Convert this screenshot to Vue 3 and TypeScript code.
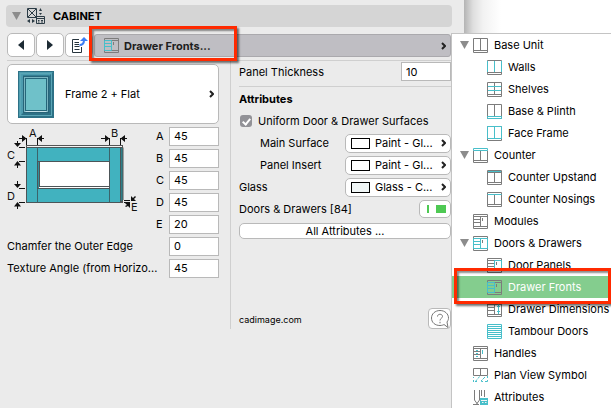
<script setup lang="ts">
import { ref } from 'vue'

type Tone = 'grey' | 'cyan' | 'fill' | 'pale'
interface Stroke { d: string; tone: Tone }
interface MenuItem { label: string; icon: string; level: number; open?: boolean }

const s = (tone: Tone, d: string): Stroke => ({ tone, d })

const cabinet = 'M.5 .5H14.5V14.5H.5ZM.5 12.5H14.5'
const split = 'M7.5 .5V12'
const topRail = 'M.5 2.5H14.5'
const drawers = 'M1 5.5H7.5M1 8.5H7.5'
const handle = 'M9.5 4V7'

const icons: Record<string, Stroke[]> = {
  base: [s('grey', cabinet + split)],
  walls: [s('grey', cabinet), s('cyan', 'M.5 1V12M7.5 1V12M14.5 1V12')],
  shelves: [s('grey', cabinet + split), s('cyan', 'M1 4.5H14M1 8.5H14')],
  plinth: [s('grey', cabinet + split), s('cyan', 'M.5 12.5H14.5V14.5H.5Z')],
  face: [s('grey', cabinet), s('cyan', 'M.5 .5H14.5V12.5H.5ZM7.5 .5V12')],
  counter: [s('grey', 'M.5 2.5V14.5H14.5V2.5M.5 12.5H14.5M7.5 3V12'), s('cyan', 'M.5 .5H14.5V2.5H.5Z')],
  upstand: [s('grey', cabinet + topRail + 'M7.5 3V12'), s('cyan', 'M1 1.5H14')],
  nosings: [s('grey', cabinet + 'M7.5 3V12'), s('cyan', 'M.5 2.5H14.5')],
  modules: [s('grey', cabinet + topRail + drawers + handle + 'M7.5 3V12')],
  doors: [s('grey', cabinet), s('cyan', 'M.5 2.5H14.5V12.5H.5ZM7.5 3V12' + drawers), s('grey', handle)],
  panels: [s('grey', cabinet + topRail + drawers), s('cyan', 'M7.5 2.5H14.5V12.5H7.5Z'), s('grey', handle)],
  fronts: [s('grey', cabinet + topRail + handle), s('cyan', 'M.5 2.5H7.5V12.5H.5Z' + drawers)],
  dimensions: [s('grey', cabinet + topRail + drawers + 'M7.5 3V12'), s('cyan', 'M11.5 1V12M10 4.5H13M10 9.5H13')],
  tambour: [s('cyan', 'M.5 .5H14.5V14.5H.5ZM1 2.5H14M1 4.5H14M1 6.5H14M1 8.5H14M1 10.5H14M1 12.5H14')],
  handles: [s('grey', cabinet + topRail + drawers + 'M7.5 3V12'), s('cyan', 'M9.5 4V8M3 4.5H5M3 7.5H5M3 10.5H5')],
  plan: [s('grey', 'M.5 .5H14.5V7.5H.5ZM7.5 .5V7.5'), s('cyan', 'M.5 9V10M.5 12V14M2 13.5H4M6.5 8.5L5 10.5M4 11.5L2.5 13.5M8.5 12V13.500H10M9.500 11.500L12 9M12 13.5H14.500V12M14.500 8V10')],
  attributes: [s('grey', 'M1.5 0V10L4 13.500L6.500 10V0M4 13V15M8.500 0V6M11.500 0V7M0 14.500H6'), s('fill', 'M7 8H15V15H7Z'), s('pale', 'M8 10.500H14M9 12.500H10.500M12 12.500H13.500')],
}

const menu: MenuItem[] = [
  { label: 'Base Unit', icon: 'base', level: 0, open: true },
  { label: 'Walls', icon: 'walls', level: 1 },
  { label: 'Shelves', icon: 'shelves', level: 1 },
  { label: 'Base & Plinth', icon: 'plinth', level: 1 },
  { label: 'Face Frame', icon: 'face', level: 1 },
  { label: 'Counter', icon: 'counter', level: 0, open: true },
  { label: 'Counter Upstand', icon: 'upstand', level: 1 },
  { label: 'Counter Nosings', icon: 'nosings', level: 1 },
  { label: 'Modules', icon: 'modules', level: 0 },
  { label: 'Doors & Drawers', icon: 'doors', level: 0, open: true },
  { label: 'Door Panels', icon: 'panels', level: 1 },
  { label: 'Drawer Fronts', icon: 'fronts', level: 1 },
  { label: 'Drawer Dimensions', icon: 'dimensions', level: 1 },
  { label: 'Tambour Doors', icon: 'tambour', level: 1 },
  { label: 'Handles', icon: 'handles', level: 0 },
  { label: 'Plan View Symbol', icon: 'plan', level: 0 },
  { label: 'Attributes', icon: 'attributes', level: 0 },
]

const selected = ref('Drawer Fronts')
const uniform = ref(true)
const thickness = ref('10')
const sizes = ref([
  { id: 'A', value: '45' },
  { id: 'B', value: '45' },
  { id: 'C', value: '45' },
  { id: 'D', value: '45' },
  { id: 'E', value: '20' },
])
const chamfer = ref('0')
const angle = ref('45')
const surfaces = [
  { label: 'Main Surface', value: 'Paint - Gl...', nested: true, tint: 'white' },
  { label: 'Panel Insert', value: 'Paint - Gl...', nested: true, tint: 'white' },
  { label: 'Glass', value: 'Glass - C...', nested: false, tint: 'glass' },
]
</script>

<template>
  <div class="window">
    <main class="panel">
      <header class="title">
        <svg class="twisty" viewBox="0 0 9 8"><path d="M0 0H9L4.500 8Z" /></svg>
        <svg class="logo" viewBox="0 0 18 16">
          <path d="M.5 .5H9.500V9.500H.5ZM1 1L9 9M9 1L1 9" />
          <path d="M9.500 8.500H17.500V15.500H9.500ZM9.500 10.500H17.500M11 12.500H12.500M14 12.500H16M11 14H12.500M14 14H16" />
          <path class="solid" d="M12 3L13.500 0L15 3ZM12 5H15L13.500 7ZM3 11V15L0 13ZM5 11V15L8 13Z" />
        </svg>
        <h1>CABINET</h1>
      </header>

      <nav class="toolbar">
        <button class="tool" type="button" aria-label="Previous"><svg viewBox="0 0 8 12"><path d="M7 1V11L1 6Z" /></svg></button>
        <button class="tool" type="button" aria-label="Next"><svg viewBox="0 0 8 12"><path d="M1 1V11L7 6Z" /></svg></button>
        <button class="tool" type="button" aria-label="Go to page">
          <svg class="page" viewBox="0 0 17 16">
            <path class="sheet" d="M8 2.500H1.500V15.500H10.500V10M3.500 5.500H8M3.500 7.500H8M3.500 9.500H8.500M3.500 12.500H8.500" />
            <path class="arrow" d="M8.500 8C12 8 13 6 13 3" />
            <path class="head" d="M9 4L13 0L17 4Z" />
          </svg>
        </button>
        <div class="picker-wrap">
          <button class="picker" type="button">
            <svg class="icon" viewBox="0 0 15 15"><path v-for="(p, i) in icons.fronts" :key="i" :class="p.tone" :d="p.d" /></svg>
            <span>{{ selected }}...</span>
            <svg class="chevron" viewBox="0 0 5 8"><path d="M1 1L4 4L1 7" /></svg>
          </button>
          <span class="callout callout-picker" />
        </div>
      </nav>

      <div class="columns">
        <section class="left">
          <button class="style-card" type="button">
            <svg class="door" viewBox="0 0 36 47">
              <rect width="36" height="47" fill="#2d7186" />
              <path d="M1 1H35L31 5H5V42L1 46Z" fill="#4d9caf" />
              <path d="M5 4H31V42H5Z" fill="#347f93" />
              <rect x="2.500" y="2.500" width="31" height="42" fill="none" stroke="#5aa6b6" />
              <rect x="5.500" y="5.500" width="25" height="36" fill="#79b5c0" stroke="#276479" />
              <rect x="7.500" y="7.500" width="21" height="32" fill="#6fc1c9" stroke="#25667a" />
              <path d="M7 41L8 40H28L29 41Z" fill="#c4e2e8" />
            </svg>
            <span>Frame 2 + Flat</span>
            <svg class="chevron" viewBox="0 0 5 8"><path d="M1 1L4 4L1 7" /></svg>
          </button>

          <div class="dims">
            <svg class="diagram" viewBox="7 126 136 86">
              <rect x="26.500" y="145.500" width="96" height="57" fill="#f4f4f4" stroke="#555" />
              <path d="M120.500 147.500H123V200L120.500 202.500Z" fill="#2c7f88" stroke="#555" />
              <rect x="26.500" y="147.500" width="94" height="55" fill="#41b2bf" stroke="#4c5558" />
              <path d="M37.500 147.500V202.500M109.500 147.500V202.500" stroke="#3b646b" />
              <rect x="37.500" y="161.500" width="72" height="27" fill="#338f9a" stroke="#4c5558" />
              <rect x="39.500" y="161.500" width="70" height="25" fill="#fff" stroke="#4c5558" />
              <path d="M39 187.500H109" stroke="#fff" />
              <path d="M26.500 138V145M37.500 138V145M109.500 138V145M120.500 138V145M19 147.500H25M19 161.500H25M19 188.500H25M19 202.500H25M124 200.500H130M124 202.500H130" stroke="#111" />
              <path d="M19 138.500H23M41 138.500H44M101 138.500H105M124 138.500H127M17.500 141V144M17.500 165V168M17.500 181V184M17.500 206V209" stroke="#111" />
              <path d="M22 135L26.500 138.500L22 142ZM42 135L37.500 138.500L42 142ZM105 135L109.500 138.500L105 142ZM125 135L120.500 138.500L125 142ZM14 143L17.500 147L21 143ZM14 165.500L17.500 161L21 165.500ZM14 184L17.500 188L21 184ZM14 206.500L17.500 202L21 206.500ZM131 196L131 201L136 201L134 199L136 197L135 196L133 198ZM125 203H130V208L128 206L126 207L125 206L127 205Z" fill="#111" />
              <text x="29" y="137">A</text>
              <text x="111" y="137">B</text>
              <text x="7" y="159">C</text>
              <text x="7" y="200">D</text>
              <text x="131" y="211">E</text>
            </svg>
            <div class="sizes">
              <label v-for="row in sizes" :key="row.id" class="row">
                <span>{{ row.id }}</span>
                <input v-model="row.value" class="field" type="text">
              </label>
            </div>
          </div>

          <label class="row"><span>Chamfer the Outer Edge</span><input v-model="chamfer" class="field" type="text"></label>
          <label class="row"><span>Texture Angle (from Horizo...</span><input v-model="angle" class="field" type="text"></label>
        </section>

        <section class="right">
          <label class="row thickness"><span>Panel Thickness</span><input v-model="thickness" class="field" type="text"></label>
          <h2>Attributes</h2>
          <label class="row check">
            <input v-model="uniform" type="checkbox">
            <span>Uniform Door &amp; Drawer Surfaces</span>
          </label>
          <div v-for="(item, i) in surfaces" :key="i" class="row" :class="{ nested: item.nested }">
            <span :id="`surface-${i}`">{{ item.label }}</span>
            <button class="surface" type="button" :aria-describedby="`surface-${i}`">
              <i class="swatch" :class="item.tint" />
              <span>{{ item.value }}</span>
              <svg class="chevron" viewBox="0 0 5 8"><path d="M1 1L4 4L1 7" /></svg>
            </button>
          </div>
          <div class="row">
            <span id="pen">Doors &amp; Drawers [84]</span>
            <button class="pen" type="button" aria-labelledby="pen"><i class="thin" /><i class="thick" /></button>
          </div>
          <button class="all" type="button">All Attributes ...</button>
          <footer>
            <a href="#">cadimage.com</a>
            <button class="help" type="button" aria-label="Help">
              <svg viewBox="0 0 20 20">
                <path d="M10 1.500C5 1.500 1.500 5 1.500 9C1.500 13.500 5 16.500 10 16.500C12 16.500 13 16 14 15.500L18 18.500L17 13C18.500 11 18.500 9.500 18.500 9C18.500 5 15 1.500 10 1.500Z" />
                <path class="mark" d="M7.500 7.500C7.500 4.500 12.500 4.500 12.500 7.500C12.500 9.300 10 9.300 10 11.500M10 12.800V14.300" />
              </svg>
            </button>
          </footer>
        </section>
      </div>
    </main>

    <aside class="menu">
      <ul>
        <li v-for="item in menu" :key="item.label">
          <button
            type="button"
            class="entry"
            :class="{ child: item.level === 1, active: item.label === selected }"
            @click="selected = item.label"
          >
            <svg v-if="item.level === 0" class="twisty" viewBox="0 0 9 8"><path v-if="item.open" d="M0 0H9L4.500 8Z" /></svg>
            <svg class="icon" viewBox="0 0 15 15"><path v-for="(p, i) in icons[item.icon]" :key="i" :class="p.tone" :d="p.d" /></svg>
            <span>{{ item.label }}</span>
          </button>
          <span v-if="item.label === 'Drawer Fronts'" class="callout callout-entry" />
        </li>
      </ul>
    </aside>
  </div>
</template>

<style>
body {
  background: #fff;
}
</style>

<style scoped>
* {
  box-sizing: border-box;
}
.window {
  position: relative;
  min-height: 100vh;
  padding-right: 147px;
  background: linear-gradient(to left, #fff 110px, #f2f2f2 128px, #dedede 138px, #b4b4b4 147px);
  color: #000;
  font: 11px/16px Inter, "Liberation Sans", sans-serif;
  overflow: hidden;
}
button,
input {
  margin: 0;
  font: inherit;
  color: inherit;
}
button {
  padding: 0;
  border: 1px solid #b9b9b9;
  border-radius: 5px;
  background: #fff;
  text-align: left;
}
svg {
  display: block;
  flex: none;
}
.panel {
  min-height: 100vh;
  padding: 5px 13px 0 6px;
  background: #ebebeb;
}
.title {
  display: flex;
  align-items: center;
  height: 22px;
  margin-right: -1px;
  padding-left: 6px;
  border-radius: 4px;
  background: #d5d5d5;
}
h1,
h2 {
  margin: 0;
  font-size: 11px;
  line-height: 24px;
  font-weight: 700;
}
.twisty {
  width: 9px;
  height: 8px;
  fill: #8c8c8c;
}
.logo {
  width: 18px;
  height: 16px;
  margin: 0 8px 0 6px;
  fill: none;
  stroke: #2b3b45;
}
.logo .solid {
  fill: #2b3b45;
  stroke: none;
}
.toolbar {
  display: flex;
  gap: 1px;
  margin-left: 1px;
  padding: 6px 0 3px;
  border-bottom: 1px solid #cfcfcf;
}
.tool {
  display: flex;
  align-items: center;
  justify-content: center;
  width: 28px;
  height: 24px;
}
.tool svg {
  width: 8px;
  height: 12px;
  fill: #1d2b34;
}
.tool .page {
  width: 17px;
  height: 16px;
}
.page .sheet {
  fill: none;
  stroke: #26343d;
}
.page .arrow {
  fill: none;
  stroke: #3b7df5;
  stroke-width: 2;
}
.page .head {
  fill: #3b7df5;
}
.picker-wrap {
  position: relative;
  flex: 1;
}
.picker {
  display: flex;
  align-items: center;
  gap: 5px;
  width: 100%;
  height: 23px;
  margin-top: 1px;
  padding: 0 4px 0 9px;
  border-color: #aaa9ad;
  border-radius: 3px;
  background: #bfbec3;
  font-weight: 700;
  color: #1d1d20;
}
.chevron {
  width: 5px;
  height: 8px;
  margin-left: auto;
  fill: none;
  stroke: #222;
  stroke-width: 2;
}
.callout {
  position: absolute;
  z-index: 2;
  border: 3px solid #ff2a00;
  box-shadow: 2px 2px 2px rgba(0, 0, 0, 0.55), inset 2px 2px 2px rgba(0, 0, 0, 0.45);
  pointer-events: none;
}
.callout-picker {
  top: -7px;
  left: -5px;
  width: 148px;
  height: 35px;
}
.columns {
  display: grid;
  grid-template-columns: 223px minmax(0, 1fr);
  margin-left: 1px;
}
.left {
  padding: 3px 11px 0 0;
}
.style-card {
  display: flex;
  align-items: center;
  gap: 11px;
  width: 100%;
  height: 60px;
  padding: 0 4px 0 10px;
}
.door {
  width: 36px;
  height: 47px;
}
.dims {
  display: flex;
  justify-content: space-between;
  margin-top: 1px;
}
.diagram {
  width: 136px;
  height: 86px;
  margin-top: 1px;
  fill: none;
}
.diagram text {
  fill: #111;
  font-size: 11px;
}
.sizes {
  width: 63px;
}
.row {
  display: flex;
  align-items: center;
  justify-content: space-between;
  height: 22px;
  white-space: nowrap;
}
.field {
  flex: none;
  width: 50px;
  height: 19px;
  padding: 0 4px;
  border: 1px solid #b9b9b9;
  border-radius: 0;
  background: #fff;
  outline: none;
}
.right {
  display: flex;
  flex-direction: column;
  min-height: 268px;
  padding-left: 8px;
  border-left: 1px solid #cfcfcf;
}
.thickness {
  height: 26px;
  padding-bottom: 4px;
  border-bottom: 1px solid #cfcfcf;
}
h2 {
  margin-bottom: -1px;
}
.check {
  justify-content: flex-start;
  gap: 6px;
  padding-left: 1px;
}
.check input {
  display: grid;
  place-items: center;
  width: 12px;
  height: 12px;
  border-radius: 3px;
  background: #929297;
  appearance: none;
}
.check input:checked::before {
  content: "";
  width: 3px;
  height: 6px;
  border: solid #fff;
  border-width: 0 2px 2px 0;
  transform: rotate(40deg);
}
.nested {
  padding-left: 21px;
}
.surface {
  display: flex;
  align-items: center;
  gap: 5px;
  width: 106px;
  height: 19px;
  padding: 0 4px 0 5px;
}
.swatch {
  width: 19px;
  height: 11px;
  border: 1px solid #000;
  background: #fff;
}
.swatch.glass {
  background: #f0f6f6;
}
.pen {
  display: flex;
  align-items: center;
  gap: 7px;
  width: 32px;
  height: 18px;
  padding-left: 7px;
}
.pen i {
  height: 8px;
  background: #4ec953;
}
.thin {
  width: 2px;
}
.thick {
  width: 10px;
}
.all {
  height: 16px;
  margin-top: 3px;
  line-height: 14px;
  text-align: center;
}
footer {
  display: flex;
  align-items: center;
  justify-content: space-between;
  margin-top: auto;
}
footer a {
  padding-top: 3px;
  font-size: 9px;
  color: inherit;
  text-decoration: none;
}
.help {
  display: grid;
  place-items: center;
  width: 23px;
  height: 21px;
  border-radius: 4px;
}
.help svg {
  width: 20px;
  height: 20px;
  fill: none;
  stroke: #777;
}
.menu {
  position: absolute;
  top: 33px;
  right: 0;
  width: 160px;
  border: solid #c4c4c4;
  border-width: 1px 0 0 1px;
  background: #fff;
}
ul {
  margin: 0;
  padding: 0;
  list-style: none;
}
li {
  position: relative;
}
.entry {
  display: flex;
  align-items: center;
  width: 100%;
  height: 22px;
  padding-left: 8px;
  border: 0;
  border-radius: 0;
  background: none;
  white-space: nowrap;
}
.entry.child {
  padding-left: 35px;
}
.entry.active {
  background: #84cd8e;
  color: #fff;
}
.icon {
  width: 15px;
  height: 15px;
  fill: none;
}
.entry .icon {
  margin-right: 6px;
}
.entry .twisty {
  margin-right: 4px;
}
.grey {
  stroke: #7c7c7c;
}
.cyan {
  stroke: #48bfca;
}
.pale {
  stroke: #f4f4f4;
}
.fill {
  fill: #48bfca;
}
.callout-entry {
  top: -8px;
  right: 0;
  left: 2px;
  height: 36px;
}
</style>
